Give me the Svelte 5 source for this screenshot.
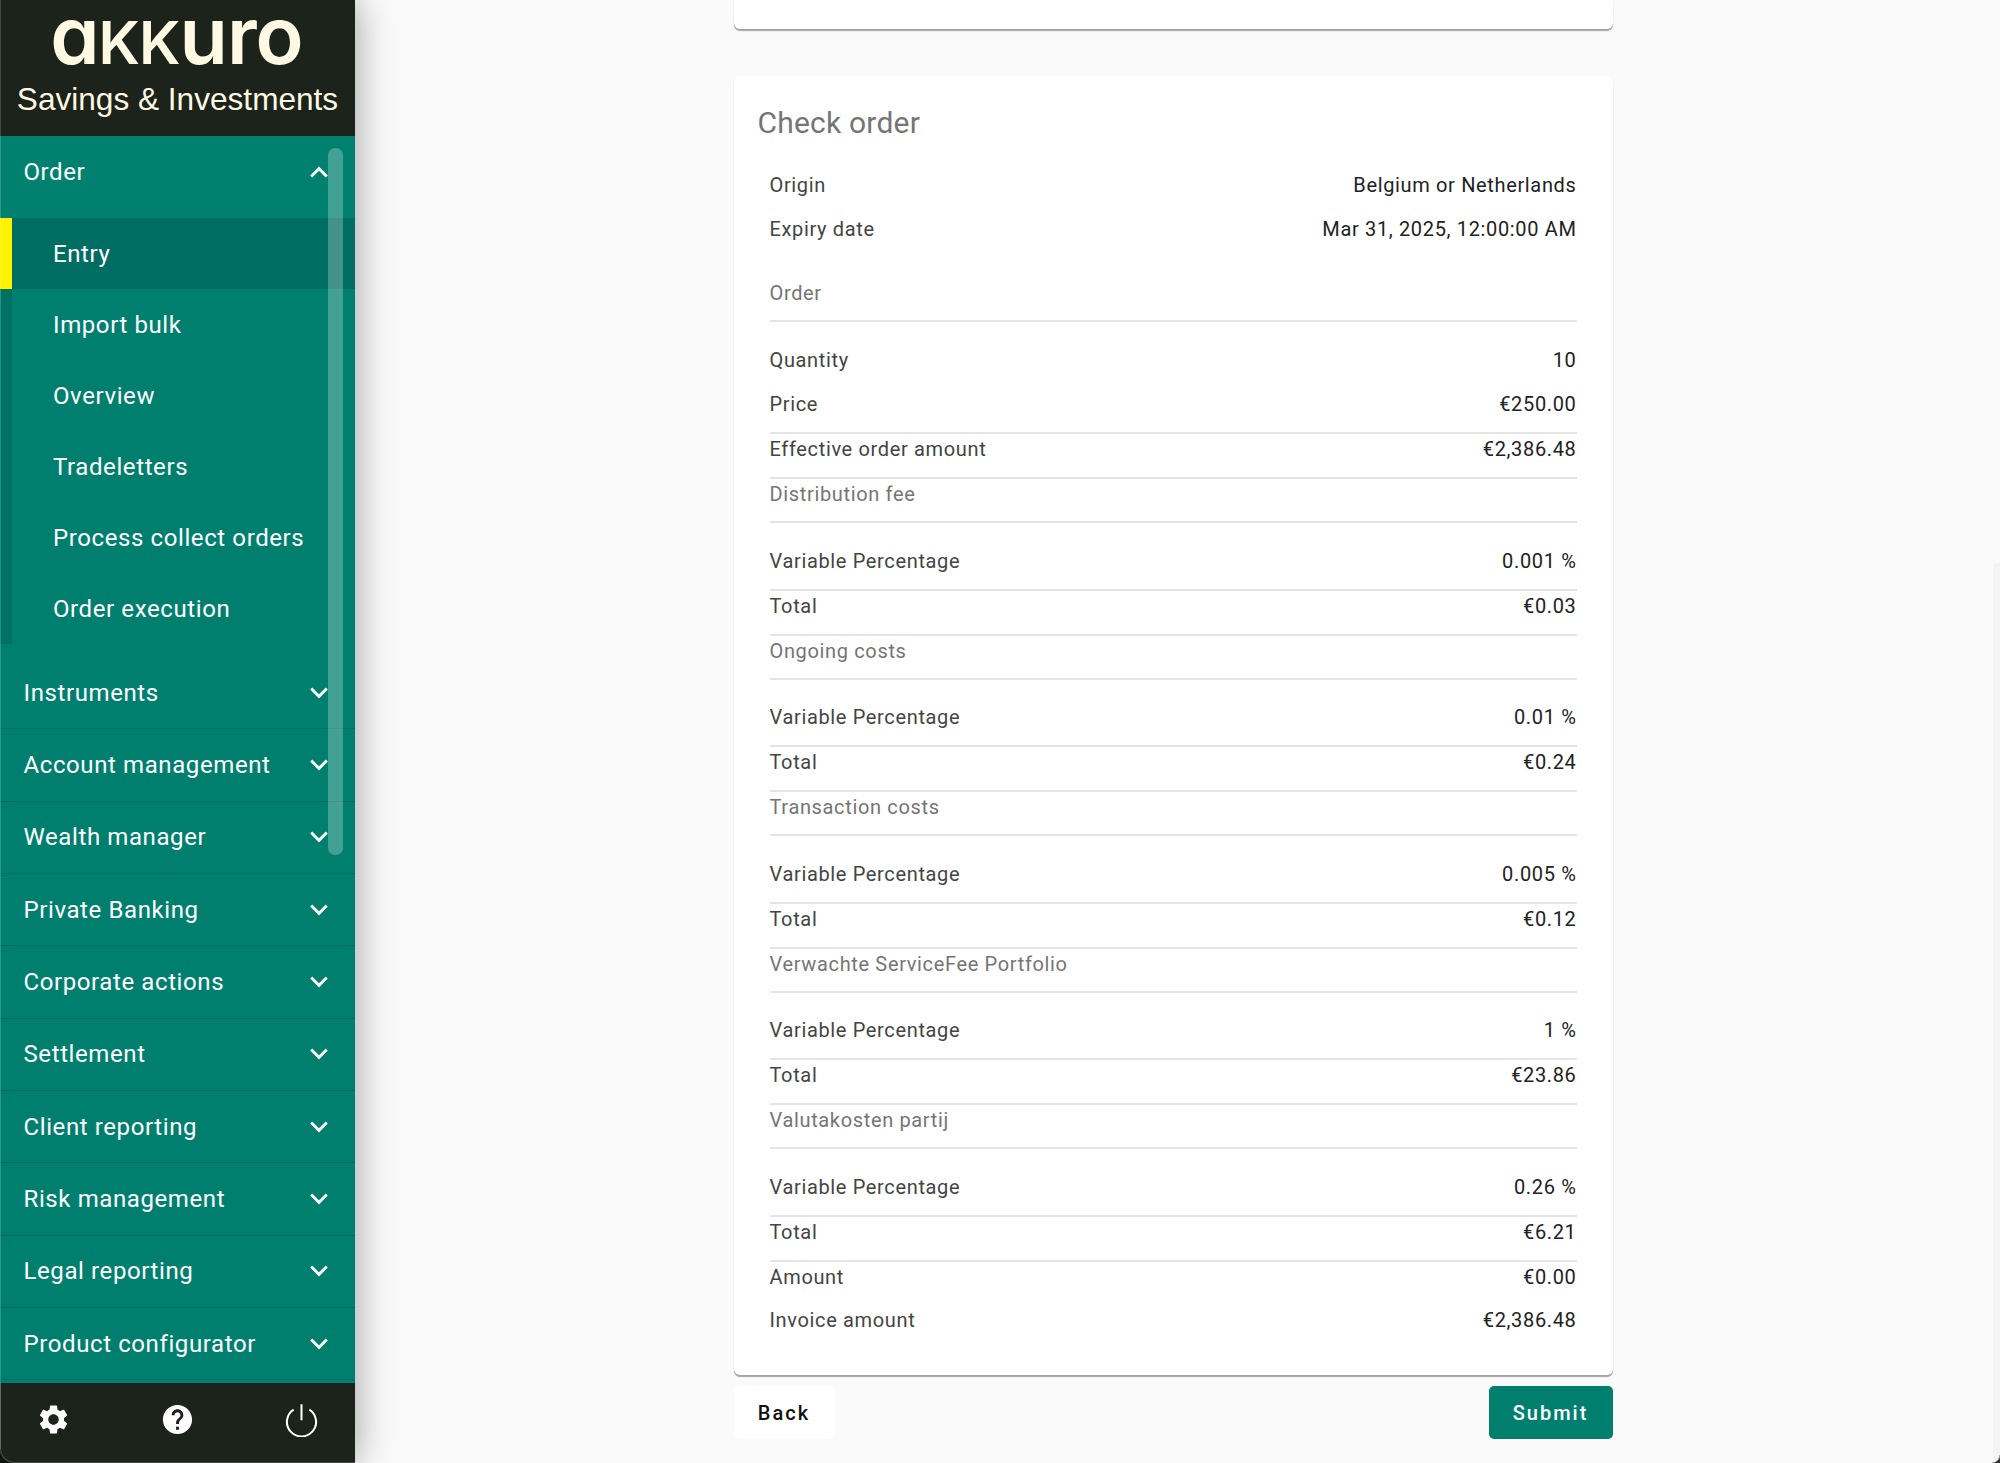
<script lang="ts">
	const subItems = ['Entry', 'Import bulk', 'Overview', 'Tradeletters', 'Process collect orders', 'Order execution'];
	const navItems = [
		'Instruments',
		'Account management',
		'Wealth manager',
		'Private Banking',
		'Corporate actions',
		'Settlement',
		'Client reporting',
		'Risk management',
		'Legal reporting',
		'Product configurator'
	];
	const feeSections = [
		{ title: 'Distribution fee', pct: '0.001 %', total: '€0.03' },
		{ title: 'Ongoing costs', pct: '0.01 %', total: '€0.24' },
		{ title: 'Transaction costs', pct: '0.005 %', total: '€0.12' },
		{ title: 'Verwachte ServiceFee Portfolio', pct: '1 %', total: '€23.86' },
		{ title: 'Valutakosten partij', pct: '0.26 %', total: '€6.21' }
	];
</script>

<div class="shell">
	<aside class="sidebar">
		<header class="brand">
			<div class="logo">a<span class="logo__k">kk</span>uro</div>
			<div class="brand__sub">Savings &amp; Investments</div>
		</header>

		<nav class="nav">
			<div class="nav__head nav__head--open">
				<span>Order</span>
				<svg class="chev" viewBox="0 0 18 12" aria-hidden="true"><path d="M2 10l7-7 7 7" /></svg>
			</div>
			<ul class="sub">
				{#each subItems as item, i}
					<li class="sub__item" class:sub__item--active={i === 0}>{item}</li>
				{/each}
			</ul>
			{#each navItems as item}
				<div class="nav__head">
					<span>{item}</span>
					<svg class="chev" viewBox="0 0 18 12" aria-hidden="true"><path d="M2 2l7 7 7-7" /></svg>
				</div>
			{/each}
			<div class="nav__thumb"></div>
		</nav>

		<footer class="tools">
			<svg viewBox="0 0 24 24" aria-hidden="true"><path d="M19.14 12.94c.04-.3.06-.61.06-.94 0-.32-.02-.64-.07-.94l2.03-1.58c.18-.14.23-.41.12-.61l-1.92-3.32c-.12-.22-.37-.29-.59-.22l-2.39.96c-.5-.38-1.03-.7-1.62-.94l-.36-2.54c-.04-.24-.24-.41-.48-.41h-3.84c-.24 0-.43.17-.47.41l-.36 2.54c-.59.24-1.13.57-1.62.94l-2.39-.96c-.22-.08-.47 0-.59.22L2.74 8.87c-.12.21-.08.47.12.61l2.03 1.58c-.05.3-.09.63-.09.94s.02.64.07.94l-2.03 1.58c-.18.14-.23.41-.12.61l1.92 3.32c.12.22.37.29.59.22l2.39-.96c.5.38 1.03.7 1.62.94l.36 2.54c.05.24.24.41.48.41h3.84c.24 0 .44-.17.47-.41l.36-2.54c.59-.24 1.13-.56 1.62-.94l2.39.96c.22.08.47 0 .59-.22l1.92-3.32c.12-.22.07-.47-.12-.61l-2.01-1.58zM12 15.6c-1.98 0-3.6-1.62-3.6-3.6s1.62-3.6 3.6-3.6 3.6 1.62 3.6 3.6-1.62 3.6-3.6 3.6z" /></svg>
			<svg viewBox="0 0 24 24" aria-hidden="true"><path d="M12 2C6.48 2 2 6.48 2 12s4.48 10 10 10 10-4.48 10-10S17.52 2 12 2zm1 17h-2v-2h2v2zm2.07-7.75l-.9.92C13.45 12.9 13 13.5 13 15h-2v-.5c0-1.1.45-2.1 1.17-2.83l1.24-1.26c.37-.36.59-.86.59-1.41 0-1.1-.9-2-2-2s-2 .9-2 2H8c0-2.21 1.79-4 4-4s4 1.79 4 4c0 .88-.36 1.68-.93 2.25z" /></svg>
			<svg class="power" viewBox="0 0 24 24" aria-hidden="true"><path d="M12 1.5v11M6.6 5.2a10 10 0 1 0 10.8 0" /></svg>
		</footer>
	</aside>

	<main class="content">
		<div class="column">
			<div class="card card--stub"></div>

			<section class="card check">
				<h2>Check order</h2>

				<div class="row row--plain"><span>Origin</span><b>Belgium or Netherlands</b></div>
				<div class="row row--plain"><span>Expiry date</span><b>Mar 31, 2025, 12:00:00 AM</b></div>

				<div class="group group--first">
					<div class="group__title">Order</div>
					<div class="row row--plain"><span>Quantity</span><b>10</b></div>
					<div class="row"><span>Price</span><b>€250.00</b></div>
					<div class="row"><span>Effective order amount</span><b>€2,386.48</b></div>
				</div>

				{#each feeSections as section}
					<div class="group">
						<div class="group__title">{section.title}</div>
						<div class="row"><span>Variable Percentage</span><b>{section.pct}</b></div>
						<div class="row"><span>Total</span><b>{section.total}</b></div>
					</div>
				{/each}

				<div class="row row--plain"><span>Amount</span><b>€0.00</b></div>
				<div class="row row--plain"><span>Invoice amount</span><b>€2,386.48</b></div>
			</section>

			<div class="actions">
				<button class="btn btn--back" type="button">Back</button>
				<button class="btn btn--submit" type="button">Submit</button>
			</div>
		</div>
		<div class="page-scroll"></div>
		<div class="window-corner"></div>
	</main>
</div>

<style>
	:global(body) {
		background: #fafafa;
	}

	.shell {
		display: flex;
		height: 1463px;
		overflow: hidden;
		background: #fafafa;
		font-family: Roboto, 'Liberation Sans', sans-serif;
	}

	.sidebar {
		display: flex;
		flex: 0 0 355px;
		flex-direction: column;
		position: relative;
		z-index: 1;
		box-shadow: 0 0 36px rgb(0 0 0 / 38%);
		background: #0c1710;
		color: #fff;
		overflow: hidden;
	}

	/* hairline of the window edge */
	.sidebar::after {
		content: '';
		position: absolute;
		top: 0;
		bottom: 14px;
		left: 0;
		width: 1px;
		background: rgb(255 255 255 / 18%);
	}

	.brand {
		flex: 0 0 136px;
		background: #1b231a;
		color: #fff8e3;
		text-align: center;
	}

	.logo {
		height: 78px;
		margin-left: -2px;
		font-family: Inter, sans-serif;
		font-feature-settings: 'cv11';
		font-size: 79px;
		font-weight: 600;
		letter-spacing: -1px;
		line-height: 70px;
	}

	.logo__k {
		font-size: 59px;
		text-transform: uppercase;
	}

	.brand__sub {
		font-family: 'Liberation Sans', sans-serif;
		font-size: 31.6px;
		line-height: 42px;
	}

	.nav {
		flex: 1 1 0;
		position: relative;
		min-height: 0;
		background: #007f6f;
	}

	.nav__head {
		display: flex;
		align-items: center;
		justify-content: space-between;
		box-sizing: border-box;
		height: 72.33px;
		border-bottom: 1px solid rgb(0 0 0 / 12%);
		padding: 0 26px 0 23.5px;
		font-size: 24px;
		letter-spacing: 0.6px;
	}

	.nav__head--open {
		height: 82px;
		border-bottom: 0;
		padding-bottom: 11px;
		background: #008170;
	}

	.chev {
		width: 20px;
		height: 14px;
		fill: none;
		stroke: #fff;
		stroke-width: 2.6;
	}

	.sub {
		margin: 0 0 13px;
		padding: 0;
		border-left: 12px solid rgb(0 0 0 / 10%);
		list-style: none;
	}

	.sub__item {
		box-sizing: border-box;
		height: 71px;
		padding: 1px 0 0 41px;
		font-size: 24px;
		letter-spacing: 0.6px;
		line-height: 71px;
	}

	.sub__item--active {
		margin-left: -12px;
		border-left: 12px solid #fff200;
		background: #006d62;
	}

	.nav__thumb {
		position: absolute;
		top: 12px;
		right: 12px;
		width: 15px;
		height: 707px;
		border-radius: 7px;
		background: rgb(255 255 255 / 26%);
	}

	.tools {
		display: flex;
		flex: 0 0 80px;
		align-items: center;
		justify-content: space-between;
		box-sizing: border-box;
		border-bottom-left-radius: 14px;
		box-shadow: inset 1px -1px 0 rgb(255 255 255 / 18%);
		padding: 0 36px 8px 36px;
		background: #1b231a;
	}

	.tools svg {
		width: 35px;
		height: 35px;
		fill: #fff;
	}

	.tools .power {
		fill: none;
		stroke: #fff;
		stroke-width: 1.4;
	}

	.content {
		display: flex;
		flex: 1 1 auto;
		justify-content: center;
		position: relative;
		min-width: 0;
	}

	.column {
		display: flex;
		flex-direction: column;
		width: 879px;
		margin-left: -9px;
	}

	.card {
		box-sizing: border-box;
		border-radius: 6px;
		box-shadow: 0 1.5px 1px rgb(0 0 0 / 35%);
		background: #fff;
	}

	.card--stub {
		flex: 0 0 29px;
		border-radius: 0 0 6px 6px;
	}

	.check {
		margin-top: 47px;
		padding: 30px 36px 0;
		height: 1299px;
		color: #222;
	}

	h2 {
		margin: 0 0 30px -12px;
		color: #757575;
		font-size: 30px;
		font-weight: 400;
		letter-spacing: 0.2px;
		line-height: 34px;
	}

	.row {
		display: flex;
		justify-content: space-between;
		box-sizing: border-box;
		height: 45px;
		border-bottom: 2px solid #e4e4e4;
		font-size: 20px;
		letter-spacing: 0.65px;
		line-height: 31px;
	}

	.row--plain {
		height: 43.5px;
		border-bottom: 0;
	}

	.row span {
		color: #444;
	}

	.row b {
		font-weight: 400;
	}

	.group {
		display: flow-root;
	}

	.group__title {
		box-sizing: border-box;
		height: 44px;
		margin-bottom: 22.6px;
		border-bottom: 2px solid #e4e4e4;
		color: #757575;
		font-size: 20px;
		letter-spacing: 0.65px;
		line-height: 31px;
	}

	.group--first {
		margin-top: 21px;
	}

	.group--first .row--plain {
		height: 44.4px;
	}

	.actions {
		display: flex;
		justify-content: space-between;
		margin-top: 11px;
	}

	.btn {
		height: 53px;
		border: 0;
		border-radius: 5px;
		font-family: inherit;
		font-size: 20px;
		font-weight: 500;
		letter-spacing: 2px;
	}

	.btn--back {
		width: 101px;
		background: #fff;
		color: #111;
	}

	.btn--submit {
		width: 124px;
		background: #007f6f;
		color: #fff;
	}

	.page-scroll {
		position: absolute;
		top: 563px;
		right: 0;
		bottom: 0;
		width: 7px;
		border-top-left-radius: 3px;
		background: #f4f4f4;
	}

	.window-corner {
		position: absolute;
		right: 0;
		bottom: 0;
		width: 8px;
		height: 8px;
		background: radial-gradient(circle at 0 0, transparent 7px, #333 8.5px);
	}
</style>
